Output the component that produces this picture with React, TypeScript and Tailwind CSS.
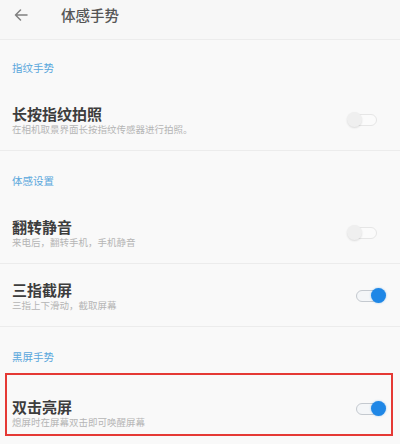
import React from "react";

type ToggleProps = { on: boolean };

function Toggle({ on }: ToggleProps) {
  if (on) {
    return (
      <div className="relative w-[40px] h-[16px]">
        <div className="absolute left-[10px] top-[2px] w-[24px] h-[12px] rounded-full border-[1.5px] border-[#c4c9cf] bg-[#f4f6f8]" />
        <div className="absolute left-[25px] top-0 w-[15px] h-[15px] rounded-full bg-[#1f87e6] shadow-[0_0_2px_rgba(31,135,230,0.5)]" />
      </div>
    );
  }
  return (
    <div className="relative w-[40px] h-[16px]">
      <div className="absolute left-[2px] top-[2px] w-[29px] h-[12px] rounded-full border-[1.5px] border-[#e6e6e6] bg-[#fbfbfb]" />
      <div className="absolute left-[1px] top-0 w-[15px] h-[15px] rounded-full bg-[#efefef] shadow-[0_1px_2px_rgba(0,0,0,0.12)]" />
    </div>
  );
}

function SectionLabel({ text, h, pt }: { text: string; h: string; pt: string }) {
  return (
    <div className={`${h} ${pt} px-[12px]`}>
      <div className="text-[10.5px] leading-[14px] text-[#5aa7dc]">{text}</div>
    </div>
  );
}

type RowProps = {
  title: string;
  sub: string;
  on: boolean;
  divider?: boolean;
  pad?: string;
  offset?: string;
};

function Row({
  title,
  sub,
  on,
  divider = true,
  pad = "pt-[16px] pb-[15px] pl-[12px] pr-[14px]",
  offset = "",
}: RowProps) {
  return (
    <div className={`${divider ? "border-b border-[#ececec]" : ""} ${pad} flex items-center justify-between`}>
      <div className="flex flex-col">
        <div className="text-[15px] leading-[18px] font-semibold text-[#3d3d3d]">{title}</div>
        <div className="text-[9.5px] leading-[12px] text-[#b5b5b5]">{sub}</div>
      </div>
      <div className={offset}>
        <Toggle on={on} />
      </div>
    </div>
  );
}

export default function App() {
  return (
    <div className="w-[400px] h-[444px] overflow-hidden bg-[#f9f9f9] font-['Noto_Sans_CJK_SC','Noto_Sans',sans-serif]">
      {/* top bar */}
      <div className="h-[40px] border-b border-[#ececec] bg-[#f7f7f7] flex items-start pt-[6px]">
        <div className="w-[61px] h-[18px] flex items-center pl-[14px]">
          <svg width="14" height="12" viewBox="0 0 14 12" fill="none">
            <path d="M13 6H1.5M6.5 1L1.5 6l5 5" stroke="#808080" strokeWidth="1.5" strokeLinecap="round" strokeLinejoin="round" />
          </svg>
        </div>
        <div className="text-[14.5px] leading-[18px] font-medium text-[#555]">体感手势</div>
      </div>

      <SectionLabel text="指纹手势" h="h-[49px]" pt="pt-[21px]" />
      <Row title="长按指纹拍照" sub="在相机取景界面长按指纹传感器进行拍照。" on={false} />

      <SectionLabel text="体感设置" h="h-[51px]" pt="pt-[23px]" />
      <Row title="翻转静音" sub="来电后，翻转手机，手机静音" on={false} />
      <Row title="三指截屏" sub="三指上下滑动，截取屏幕" on={true} pad="pt-[17px] pb-[15px] pl-[12px] pr-[14px]" />

      <SectionLabel text="黑屏手势" h="h-[46px]" pt="pt-[23px]" />
      <div className="mx-[5px] w-[388px] border-2 border-[#e53935]">
        <Row
          title="双击亮屏"
          sub="熄屏时在屏幕双击即可唤醒屏幕"
          on={true}
          divider={false}
          pad="pt-[23px] pb-[6px] pl-[5px] pr-[5px]"
          offset="-mt-[8px]"
        />
      </div>
    </div>
  );
}
